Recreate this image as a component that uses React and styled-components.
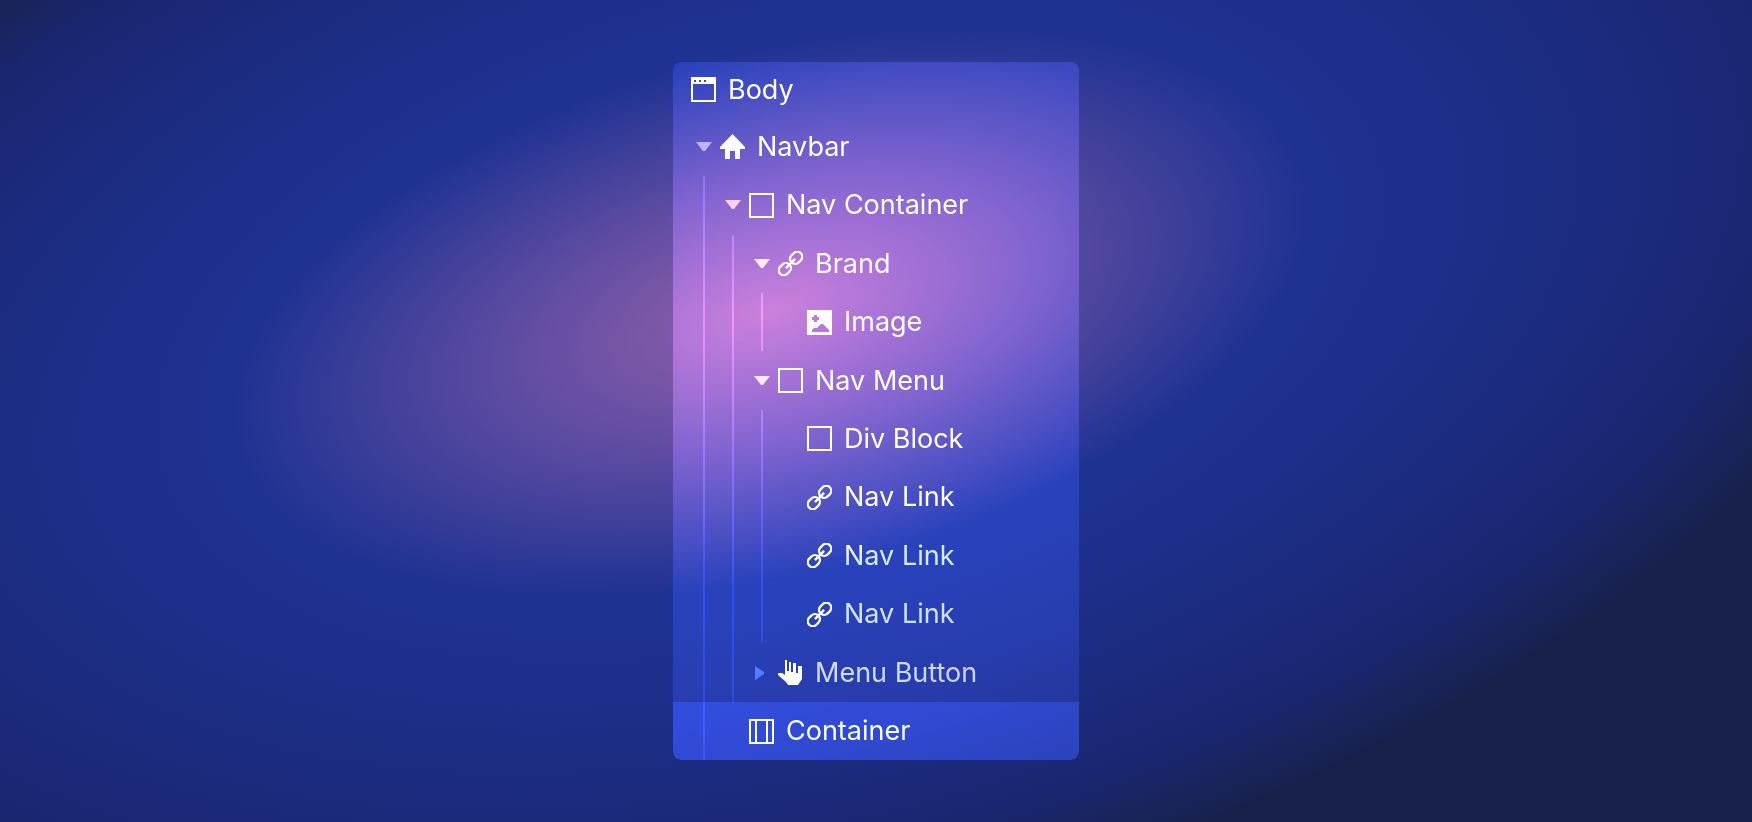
import React from "react";
import styled, { createGlobalStyle } from "styled-components";

const GlobalStyle = createGlobalStyle`
  * { box-sizing: border-box; }
  body { margin: 0; background: #18214c; }
`;

const Stage = styled.main`
  position: relative;
  isolation: isolate;
  overflow: hidden;
  min-height: 100vh;
  display: flex;
  align-items: center;
  justify-content: center;
  padding: 24px;
  background: #18214c;
  font-family: Inter, "Liberation Sans", sans-serif;
`;

const Glow = styled.div`
  position: absolute;
  z-index: -2;
  left: 44%;
  top: 38%;
  width: 137vw;
  height: 71vw;
  transform: translate(-50%, -50%) rotate(-14deg);
  background:
    radial-gradient(23% 21% at center, rgb(148, 97, 172), rgba(146, 97, 174, 0.54) 50%, rgba(146, 97, 174, 0)),
    radial-gradient(closest-side, #1e3294 0%, #1e3292 45%, #1c2d85 65%, #1a2670 87%, #18214c 100%);
`;

const Tree = styled.ul`
  position: relative;
  display: flex;
  flex-direction: column;
  width: 406px;
  max-width: 100%;
  min-height: 85vh;
  margin: 0;
  padding: 0;
  list-style: none;
  border-radius: 8px;
  overflow: hidden;

  &::before {
    content: "";
    position: absolute;
    z-index: -1;
    inset: 0;
    border-radius: 8px;
    background: rgb(70, 62, 56);
    mix-blend-mode: color-dodge;
  }
`;

const Row = styled.li`
  position: relative;
  display: flex;
  align-items: center;
  flex: 1 0 48px;
  padding-left: 18px;

  &:first-child {
    flex: 0 0 56px;
  }

  &::before {
    content: "";
    display: ${(p) => (p.$selected ? "block" : "none")};
    position: absolute;
    z-index: -1;
    inset: 0;
    border-radius: 0 0 8px 8px;
    background: rgb(52, 54, 54);
    mix-blend-mode: color-dodge;
  }
`;

const Cell = styled.span`
  flex: none;
  display: flex;
  align-items: center;
  justify-content: center;
  align-self: stretch;
  width: 29px;
  padding-right: 3px;
`;

const Guide = styled.span`
  align-self: stretch;
  width: 2px;
  background: rgb(48, 42, 56);
  mix-blend-mode: color-dodge;
`;

const Toggle = styled.button`
  display: flex;
  align-items: center;
  justify-content: center;
  width: 26px;
  height: 26px;
  padding: 0;
  border: 0;
  background: none;
  color: rgb(128, 128, 128);
  mix-blend-mode: color-dodge;
  cursor: pointer;
`;

const Icon = styled.svg`
  flex: none;
  width: 25px;
  height: 25px;
  margin-right: 12px;
  color: #fff;
`;

const Label = styled.span`
  font-size: 27px;
  line-height: 32px;
  white-space: nowrap;
  color: rgb(206, 184, 200);
  mix-blend-mode: color-dodge;
`;

const icons = {
  body: (
    <path fill="currentColor" fillRule="evenodd" d="M0 0H25V25H0ZM2 7V23H23V7ZM3 3V5H5V3ZM8 3V5H10V3ZM13 3V5H15V3Z" />
  ),
  home: <path fill="currentColor" d="M12.500 0L25 13V15H20V25H15V17H10V25H5V15H0V13Z" />,
  box: <path fill="none" stroke="currentColor" strokeWidth="2" d="M1 1H24V24H1Z" />,
  link: (
    <g fill="none" stroke="currentColor" strokeWidth="2.400" transform="rotate(-45 12.500 12.500)">
      <rect x="-2" y="7.500" width="13" height="10" rx="5" />
      <rect x="14" y="7.500" width="13" height="10" rx="5" />
      <path d="M6 12.500H19" />
    </g>
  ),
  image: (
    <path fill="currentColor" fillRule="evenodd" d="M0 0H25V25H0ZM7 5V7H5V10H7V12H10V10H12V7H10V5ZM5 22H22V20L16 14H14L10 18H7L5 20Z" />
  ),
  hand: (
    <path fill="currentColor" d="M7 0H9V11H11V2H13V12H15V3H18V13H20V6H24V19L20 25H10L8 22L0 15V13H4L7 15Z" />
  ),
  container: (
    <path fill="none" stroke="currentColor" strokeWidth="2" d="M1 1H24V24H1ZM7 1V24M18 1V24" />
  ),
};

// Each entry of `cols` is one indent column: g = guide line, o = open toggle, c = closed toggle, "-" = empty.
const rows = [
  { cols: "", icon: "body", label: "Body" },
  { cols: "o", icon: "home", label: "Navbar" },
  { cols: "go", icon: "box", label: "Nav Container" },
  { cols: "ggo", icon: "link", label: "Brand" },
  { cols: "ggg-", icon: "image", label: "Image" },
  { cols: "ggo", icon: "box", label: "Nav Menu" },
  { cols: "ggg-", icon: "box", label: "Div Block" },
  { cols: "ggg-", icon: "link", label: "Nav Link" },
  { cols: "ggg-", icon: "link", label: "Nav Link" },
  { cols: "ggg-", icon: "link", label: "Nav Link" },
  { cols: "ggc", icon: "hand", label: "Menu Button" },
  { cols: "g-", icon: "container", label: "Container", selected: true },
];

function Column({ kind, label }) {
  const open = kind === "o";
  return (
    <Cell>
      {kind === "g" && <Guide />}
      {(open || kind === "c") && (
        <Toggle type="button" aria-label={label} aria-expanded={open}>
          <svg width="16" height="16" viewBox="0 0 16 16" aria-hidden="true">
            <path fill="currentColor" d={open ? "M0 3H16L9 12H7Z" : "M1 1V15L10 9V7Z"} />
          </svg>
        </Toggle>
      )}
    </Cell>
  );
}

export default function App() {
  return (
    <>
      <GlobalStyle />
      <Stage>
        <Glow />
        <Tree>
          {rows.map((row, i) => (
            <Row key={i} $selected={row.selected}>
              {[...row.cols].map((kind, c) => (
                <Column key={c} kind={kind} label={row.label} />
              ))}
              <Icon viewBox="0 0 25 25" aria-hidden="true">{icons[row.icon]}</Icon>
              <Label>{row.label}</Label>
            </Row>
          ))}
        </Tree>
      </Stage>
    </>
  );
}
